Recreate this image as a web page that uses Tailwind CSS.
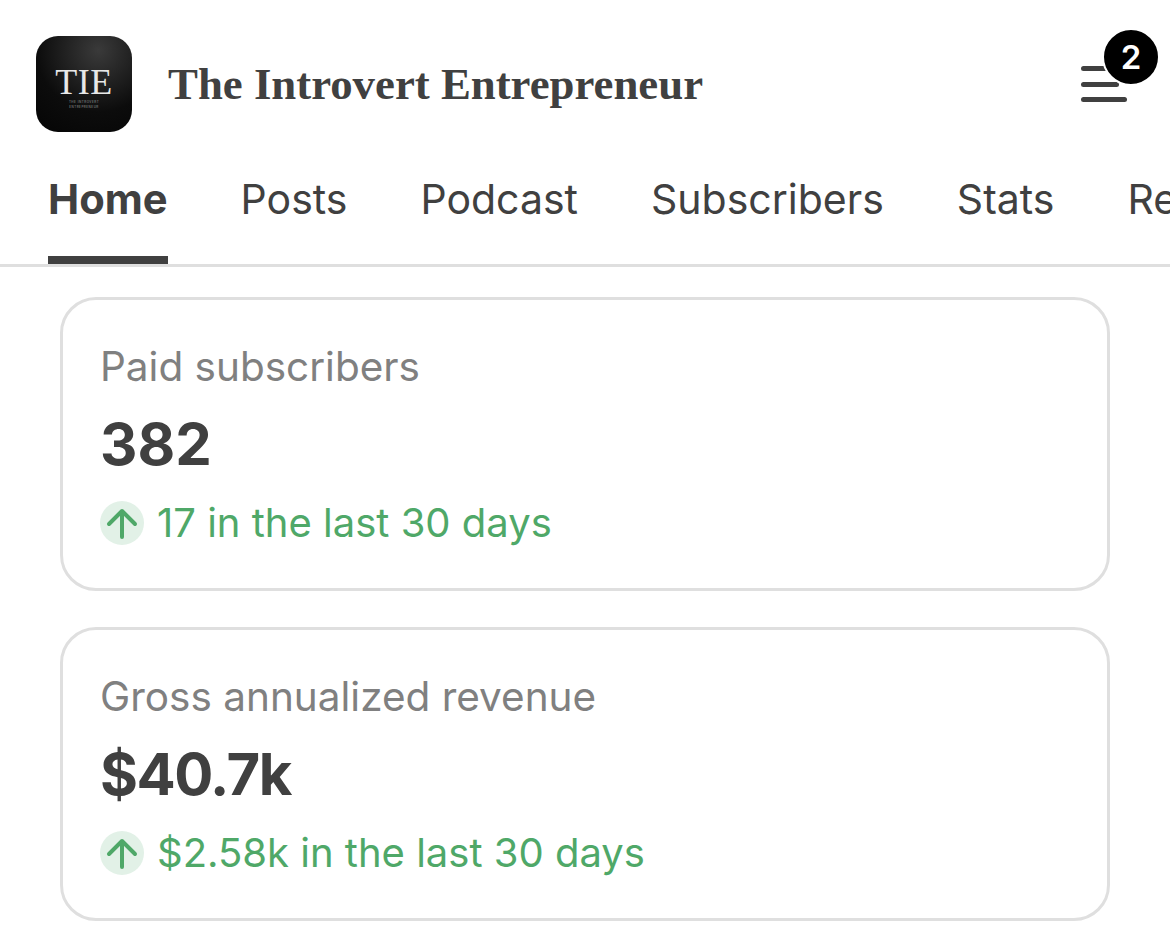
<!DOCTYPE html>
<html lang="en">
<head>
  <meta charset="UTF-8" />
  <title>The Introvert Entrepreneur</title>
  <script src="https://cdn.jsdelivr.net/npm/@tailwindcss/browser@4"></script>
</head>
<body class="bg-white font-['Inter',sans-serif] text-[#404040] w-[1170px] h-[941px] overflow-hidden">
  <!-- header -->
  <header class="flex items-center pt-[36px] pl-[36px] pr-[43px]">
    <div class="w-[96px] h-[96px] rounded-[22px] bg-[radial-gradient(circle_at_65%_15%,#3a3a3a,#0c0c0c_60%,#050505)] flex flex-col items-center justify-center shrink-0">
      <div class="font-['Liberation_Serif',serif] text-[36px] leading-[36px] text-[#e8e8e8] tracking-[0.5px] mt-[5px]">TIE</div>
      <div class="text-[3px] leading-[5px] text-[#999] text-center uppercase tracking-[0.5px]">The Introvert<br>Entrepreneur</div>
    </div>
    <h1 class="ml-[36px] font-['Liberation_Serif',serif] font-bold text-[44.8px] leading-none text-[#404040]">The Introvert Entrepreneur</h1>
    <div class="relative ml-auto w-[46px] h-[36px] flex flex-col justify-between">
      <span class="block w-[30px] h-[5px] rounded-full bg-[#404040]"></span>
      <span class="block w-[38px] h-[5px] rounded-full bg-[#404040]"></span>
      <span class="block w-[46px] h-[5px] rounded-full bg-[#404040]"></span>
      <span class="absolute left-[23px] top-[-36px] w-[54px] h-[54px] rounded-full bg-black text-white border-[2px] border-white box-content -m-[2px] flex items-center justify-center text-[33px] font-semibold leading-none">2</span>
    </div>
  </header>

  <!-- tabs -->
  <nav class="mt-[36px] h-[99px] border-b-[3px] border-[#dfdfdf] flex gap-[73px] pl-[48px] overflow-hidden text-[41px] leading-none whitespace-nowrap">
    <a class="h-[96px] pt-[11px] font-bold border-b-[8px] border-[#404040] text-[41.7px]">Home</a>
    <a class="pt-[11px]">Posts</a>
    <a class="pt-[11px]">Podcast</a>
    <a class="pt-[11px]">Subscribers</a>
    <a class="pt-[11px]">Stats</a>
    <a class="pt-[11px]">Revenue</a>
  </nav>

  <!-- stat cards -->
  <main class="mt-[30px] ml-[60px] w-[1050px] flex flex-col gap-[36px]">
    <section class="h-[294px] border-[3px] border-[#dfdfdf] rounded-[36px] pl-[37px] pt-[44px]">
      <p class="text-[40.5px] leading-[46px] text-[#808080]">Paid subscribers</p>
      <p class="mt-[19px] text-[58px] leading-[70px] font-bold">382</p>
      <div class="mt-[21px] flex items-center gap-[13px] text-[40px] leading-[46px] text-[#4fa868]">
        <span class="w-[44px] h-[44px] rounded-full bg-[#e2f1e7] flex items-center justify-center shrink-0">
          <svg width="32" height="32" viewBox="0 0 32 32" fill="none" stroke="#4fa868" stroke-width="4" stroke-linecap="round" stroke-linejoin="round"><path d="M16 30V4M3 17 16 4l13 13"/></svg>
        </span>
        <span>17 in the last 30 days</span>
      </div>
    </section>
    <section class="h-[294px] border-[3px] border-[#dfdfdf] rounded-[36px] pl-[37px] pt-[44px]">
      <p class="text-[40.5px] leading-[46px] text-[#808080]">Gross annualized revenue</p>
      <p class="mt-[19px] text-[58px] leading-[70px] font-bold tracking-[-1.5px]">$40.7k</p>
      <div class="mt-[21px] flex items-center gap-[13px] text-[40px] leading-[46px] text-[#4fa868]">
        <span class="w-[44px] h-[44px] rounded-full bg-[#e2f1e7] flex items-center justify-center shrink-0">
          <svg width="32" height="32" viewBox="0 0 32 32" fill="none" stroke="#4fa868" stroke-width="4" stroke-linecap="round" stroke-linejoin="round"><path d="M16 30V4M3 17 16 4l13 13"/></svg>
        </span>
        <span>$2.58k in the last 30 days</span>
      </div>
    </section>
  </main>
</body>
</html>
